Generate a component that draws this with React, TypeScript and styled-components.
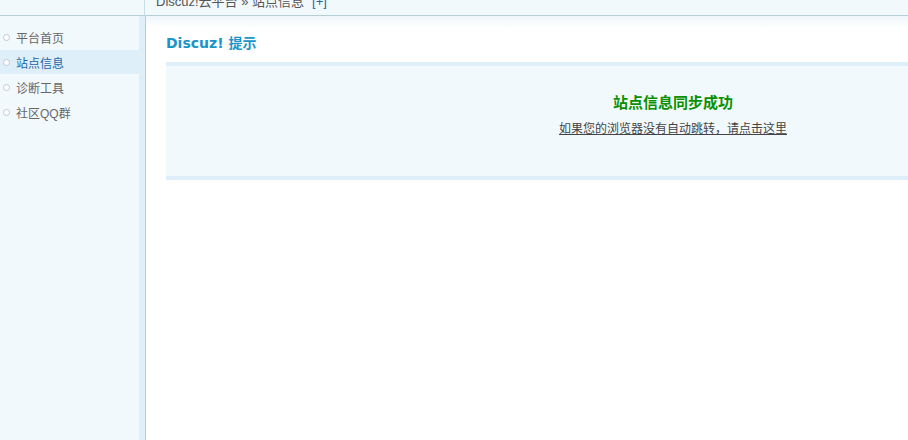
import * as React from "react";
import styled, { createGlobalStyle } from "styled-components";

const GlobalStyle = createGlobalStyle`
  html, body {
    margin: 0;
    padding: 0;
    overflow: hidden;
    background: #fff;
  }
  body {
    font: 12px "Liberation Sans", "Noto Sans CJK SC", sans-serif;
    color: #666;
  }
`;

// page is scrolled a little, so the top bar is partly cut off
const Page = styled.div`
  margin-top: -14px;
  height: 454px;
  display: grid;
  grid-template-columns: 145px 1fr;
  grid-template-rows: 30px 1fr;
`;

const TopLeft = styled.div`
  background: #f2f9fd;
  border-bottom: 1px solid #b5cfd9;
  border-right: 1px solid #c8dde6;
`;

const TopBar = styled.div`
  background: #f2f9fd;
  border-bottom: 1px solid #b5cfd9;
  padding: 2px 0 0 11px;
  box-sizing: border-box;
  line-height: 28px;
  font-size: 13px;
  color: #555;
  white-space: nowrap;

  a {
    color: #2366a8;
    text-decoration: none;
    margin-left: 8px;
  }
`;

const Sidebar = styled.div`
  background: #f2f9fd;
  border-right: 6px solid #deeffa;
  padding-top: 9px;
`;

const MenuItem = styled.div<{ $active?: boolean }>`
  display: flex;
  align-items: center;
  height: 24px;
  margin-bottom: 1px;
  padding-left: 3px;
  font-size: 12px;
  color: ${(p) => (p.$active ? "#2366a8" : "#666")};
  background: ${(p) => (p.$active ? "#deeffa" : "transparent")};

  &::before {
    content: "";
    width: 5px;
    height: 5px;
    border: 1px solid #c2c8cc;
    border-radius: 50%;
    margin-right: 6px;
    background: #fff;
  }
`;

const Main = styled.div`
  border-left: 1px solid #b5cfd9;
  background: linear-gradient(#eef6fb 0, #ffffff 12px);
  padding: 17px 0 0 20px;
  overflow: hidden;
`;

const Heading = styled.h3`
  margin: 0 0 9px;
  font-family: "DejaVu Sans", "Noto Sans CJK SC", sans-serif;
  font-size: 14px;
  line-height: 20px;
  font-weight: bold;
  color: #1a95c9;
`;

const InfoBox = styled.div`
  width: 1014px;
  height: 110px;
  box-sizing: content-box;
  background: #f2f9fd;
  border-top: 4px solid #deeffa;
  border-bottom: 4px solid #deeffa;
  text-align: center;
`;

const Success = styled.h4`
  margin: 0;
  padding-top: 28px;
  font-size: 15px;
  line-height: 18px;
  font-weight: bold;
  color: #099000;
`;

const Jump = styled.a`
  display: inline-block;
  margin-top: 9px;
  font-size: 12px;
  line-height: 16px;
  color: #444;
  text-decoration: underline;
`;

const menu = ["平台首页", "站点信息", "诊断工具", "社区QQ群"];

export default function App() {
  return (
    <>
      <GlobalStyle />
      <Page>
        <TopLeft />
        <TopBar>
          Discuz!云平台 » 站点信息<a href="#">[+]</a>
        </TopBar>
        <Sidebar>
          {menu.map((m, i) => (
            <MenuItem key={m} $active={i === 1}>
              {m}
            </MenuItem>
          ))}
        </Sidebar>
        <Main>
          <Heading>Discuz! 提示</Heading>
          <InfoBox>
            <Success>站点信息同步成功</Success>
            <Jump href="#">如果您的浏览器没有自动跳转，请点击这里</Jump>
          </InfoBox>
        </Main>
      </Page>
    </>
  );
}
